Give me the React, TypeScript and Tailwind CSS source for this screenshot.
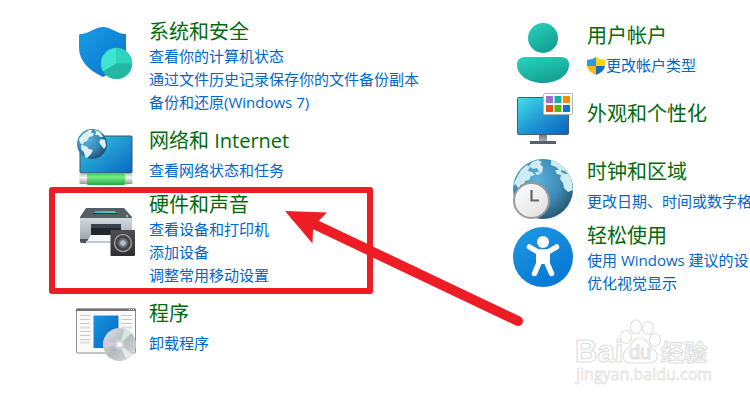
import type { ReactNode } from "react";

type Item = {
  title: string;
  links: string[];
  icon: ReactNode;
  rowCls?: string;
  iconCls?: string;
  bodyCls?: string;
  shield?: boolean;
};

function SecurityIcon() {
  return (
    <svg viewBox="0 0 60 60" className="size-full" aria-hidden="true">
      <defs>
        <linearGradient id="sec-a" x1="0" y1="0" x2="1" y2="1">
          <stop offset="0" stopColor="#1b9de2" />
          <stop offset="1" stopColor="#0672cf" />
        </linearGradient>
      </defs>
      <path d="M5 11C14 11 20 4 28 4s14 7 23 7v16C51 39 42 48 28 54 13 47 4 37 4 25V12Z" fill="url(#sec-a)" />
      <circle cx="41.500" cy="40.500" r="15.700" fill="#28c4ae" />
      <path d="M41.500 40.500V25a15.500 15.500 0 0 0-13.400 23.200Z" fill="#3fe4d0" />
      <path d="M41.500 40.500V25A15.500 15.500 0 0 1 57 40.500Z" fill="#30d3bd" />
      <path d="M41.500 40.500H57A15.500 15.500 0 0 1 28.100 48.200Z" fill="#22b8a5" />
    </svg>
  );
}

function NetworkIcon() {
  return (
    <svg viewBox="0 0 60 60" className="size-full" aria-hidden="true">
      <defs>
        <linearGradient id="net-a" x1="0" y1="0" x2="1" y2="1">
          <stop offset="0" stopColor="#36c8e0" />
          <stop offset="1" stopColor="#0b67c1" />
        </linearGradient>
        <radialGradient id="net-b" cx="0.35" cy="0.35" r="0.7">
          <stop offset="0" stopColor="#5fb4dc" />
          <stop offset="0.600" stopColor="#3587b5" />
          <stop offset="1" stopColor="#1e4f71" />
        </radialGradient>
        <linearGradient id="net-c" x1="0" y1="0" x2="0" y2="1">
          <stop offset="0" stopColor="#37c95a" />
          <stop offset="0.300" stopColor="#7af082" />
          <stop offset="1" stopColor="#25a548" />
        </linearGradient>
        <linearGradient id="net-d" x1="0" y1="0" x2="0" y2="1">
          <stop offset="0" stopColor="#c4c4c4" />
          <stop offset="0.350" stopColor="#f8f8f8" />
          <stop offset="1" stopColor="#8f9a94" />
        </linearGradient>
      </defs>
      <rect x="5" y="8" width="52" height="37" rx="1" fill="url(#net-a)" stroke="#42525e" />
      <rect x="4.500" y="46" width="53" height="10" rx="1" fill="url(#net-d)" />
      <rect x="12" y="45.500" width="38" height="11.500" rx="1" fill="url(#net-c)" />
      <circle cx="17" cy="16" r="15" fill="url(#net-b)" />
      <g fill="#dcf2f6">
        <path d="M4 11 8 6l6-4 3 0-1 3 3 0-1 3-4 1-2 4-3 1-1 3-3-2Z" />
        <path d="M6 17l5 1 3 3 4 1-2 4-4 4-2-1-1-5-3-3Z" />
        <path d="M20 2l5 2 3 5-3 0-2-2-3 0 1-2Z" />
        <path d="M26 11l4 1 1 6-2 3-3-4-2-3Z" />
      </g>
    </svg>
  );
}

function HardwareIcon() {
  return (
    <svg viewBox="0 0 60 60" className="size-full" aria-hidden="true">
      <defs>
        <linearGradient id="hw-a" x1="0" y1="0" x2="0" y2="1">
          <stop offset="0" stopColor="#d4dae1" />
          <stop offset="1" stopColor="#9ba4ae" />
        </linearGradient>
        <linearGradient id="hw-b" x1="0" y1="0" x2="1" y2="0">
          <stop offset="0" stopColor="#1fb7dc" />
          <stop offset="1" stopColor="#3ee59a" />
        </linearGradient>
        <linearGradient id="hw-c" x1="0" y1="0" x2="0" y2="1">
          <stop offset="0" stopColor="#4d4d4d" />
          <stop offset="1" stopColor="#303030" />
        </linearGradient>
      </defs>
      <path d="M11 8h38l8 9v2H5v-2Z" fill="#565e66" />
      <path d="M21 11h18l3 2H18Z" fill="url(#hw-b)" />
      <path d="M18 13h24v1H18Z" fill="#2b3238" />
      <circle cx="52" cy="16" r="1.200" fill="#5af03c" />
      <path d="M5 18h52v22H5Z" fill="url(#hw-a)" />
      <path d="M5 39h52v4H7q-2 0-2-2Z" fill="#4b5157" />
      <path d="M16 24h30v15H16Z" fill="#20262c" />
      <path d="M16 24h30v4H16Z" fill="#39434b" />
      <path d="M16 35h26l-3 8H11Z" fill="#f6f7f8" />
      <path d="M11 41h31v2H11Z" fill="#c4cbd0" />
      <rect x="35.500" y="30" width="24.500" height="26" rx="1" fill="url(#hw-c)" />
      <circle cx="48" cy="43" r="8.500" fill="#444" stroke="#9b9b9b" strokeWidth="1.500" />
      <circle cx="48" cy="43" r="5" fill="#69727a" />
      <circle cx="48" cy="43" r="2.800" fill="#b5bfc6" />
    </svg>
  );
}

function ProgramsIcon() {
  return (
    <svg viewBox="0 0 62 60" className="h-full w-[62px]" aria-hidden="true">
      <defs>
        <linearGradient id="pr-a" x1="0" y1="0" x2="1" y2="1">
          <stop offset="0" stopColor="#1795e0" />
          <stop offset="1" stopColor="#0666c2" />
        </linearGradient>
        <linearGradient id="pr-b" x1="0" y1="0" x2="1" y2="1">
          <stop offset="0" stopColor="#e2e5e6" />
          <stop offset="0.500" stopColor="#b3bbbe" />
          <stop offset="1" stopColor="#dadddd" />
        </linearGradient>
      </defs>
      <rect x="1.500" y="4" width="59" height="44" rx="1" fill="#fafafa" stroke="#8c8c8c" />
      <path d="M1 4.500q0-1 1-1h58q1 0 1 1V6H1Z" fill="#777370" />
      <path d="M54 4.500h1m1 0h1m1 0h1" stroke="#fff" />
      <path d="M5 10.500h10M5 14.500h10M5 18.500h10M5 26.500h10M5 30.500h10M5 34.500h10M46 10.500h11M46 14.500h11M46 18.500h11" stroke="#c9c9c9" />
      <path d="M5 22.500h10M5 37.500h10M46 22.500h11" stroke="#dedede" strokeWidth="2" />
      <path d="M18.500 10.500h25V43h-25Z" fill="url(#pr-a)" />
      <circle cx="44.500" cy="39.500" r="16.500" fill="url(#pr-b)" />
      <path d="m44.500 39.500 5-15.500q4 1 7 4Z" fill="#d3ead6" />
      <path d="m44.500 39.500-16-4q-1 3 0 7Z" fill="#ddc7df" />
      <path d="m44.500 39.500 7 15q4-2 6-5Z" fill="#e7e9e9" />
      <circle cx="44.500" cy="39.500" r="5" fill="#cfd5d6" />
      <circle cx="44.500" cy="39.500" r="2.500" fill="#fafafa" />
    </svg>
  );
}

function UserIcon() {
  return (
    <svg viewBox="0 0 60 60" className="size-full" aria-hidden="true">
      <defs>
        <linearGradient id="us-a" x1="0.200" y1="0" x2="0.800" y2="1">
          <stop offset="0" stopColor="#28d0bc" />
          <stop offset="1" stopColor="#109a8c" />
        </linearGradient>
      </defs>
      <circle cx="30" cy="15" r="15" fill="url(#us-a)" />
      <path d="M12 34h36q8 0 8 8c0 11-13 18-26 18S4 53 4 42q0-8 8-8Z" fill="url(#us-a)" />
    </svg>
  );
}

function AppearanceIcon() {
  return (
    <svg viewBox="0 0 60 60" className="size-full" aria-hidden="true">
      <defs>
        <linearGradient id="ap-a" x1="0" y1="0" x2="1" y2="1">
          <stop offset="0" stopColor="#3fe0ee" />
          <stop offset="0.500" stopColor="#2299d4" />
          <stop offset="1" stopColor="#0a62bc" />
        </linearGradient>
        <linearGradient id="ap-b" x1="0" y1="0" x2="0" y2="1">
          <stop offset="0" stopColor="#6f7b84" />
          <stop offset="1" stopColor="#a4adb4" />
        </linearGradient>
      </defs>
      <rect x="4.500" y="6.500" width="51" height="37" rx="1" fill="url(#ap-a)" stroke="#4b5c69" />
      <path d="M26 44h8v6h-8Z" fill="url(#ap-b)" />
      <path d="M17 50h26v3H17Z" fill="#56616a" />
      <rect x="30.500" y="2.500" width="29" height="21" rx="1" fill="#fbfbfb" stroke="#b5b5b5" />
      <path d="M33 5h7v7h-7Z" fill="#9a70d8" />
      <path d="M41.500 5h7v7h-7Z" fill="#18b39f" />
      <path d="M50 5h7v7h-7Z" fill="#f58c08" />
      <path d="M33 14h7v7h-7Z" fill="#e25418" />
      <path d="M41.500 14h7v7h-7Z" fill="#58b512" />
      <path d="M50 14h7v7h-7Z" fill="#0878d4" />
    </svg>
  );
}

function ClockIcon() {
  return (
    <svg viewBox="0 0 60 60" className="size-full" aria-hidden="true">
      <defs>
        <radialGradient id="ck-a" cx="0.400" cy="0.350" r="0.650">
          <stop offset="0" stopColor="#5bb1d9" />
          <stop offset="0.600" stopColor="#3d8db8" />
          <stop offset="1" stopColor="#285e7c" />
        </radialGradient>
        <linearGradient id="ck-b" x1="0" y1="0" x2="1" y2="1">
          <stop offset="0" stopColor="#fff" />
          <stop offset="1" stopColor="#dedede" />
        </linearGradient>
        <clipPath id="ck-c">
          <circle cx="30" cy="30" r="30" />
        </clipPath>
      </defs>
      <circle cx="30" cy="30" r="30" fill="url(#ck-a)" />
      <g fill="#d0ecf2" clipPath="url(#ck-c)">
        <path d="m3 20 5-9 6-5 3 2-2 4 4 1 3 3-4 1-2 4-4 1-1 3-4 1 0 3-3-1-1-3-3 2Z" />
        <path d="m19 3 6-2 4 2-2 2 3 3-1 6-3-1-2-4-4 1-4-3Z" />
        <path d="m22 13 4 0 2 2-4 1Z" />
        <path d="m38 1 8 2 8 7 4 7 2 14-5 2-4-4-1-5-3-4 1-4-4-1-2-4 4 0-3-3-5-2Z" />
      </g>
      <path d="m48 11 4 1 3 3-3 0-4-2Z" fill="#4a9dc6" />
      <circle cx="18.500" cy="41.500" r="17.500" fill="url(#ck-b)" stroke="#999" strokeWidth="2" />
      <path d="M18.500 31v10.500H26" fill="none" stroke="#666" strokeWidth="2.200" />
    </svg>
  );
}

function AccessIcon() {
  return (
    <svg viewBox="0 0 60 60" className="size-full" aria-hidden="true">
      <defs>
        <linearGradient id="ac-a" x1="0.200" y1="0" x2="0.800" y2="1">
          <stop offset="0" stopColor="#1c98e2" />
          <stop offset="1" stopColor="#0575d4" />
        </linearGradient>
      </defs>
      <circle cx="30" cy="30" r="30" fill="url(#ac-a)" />
      <circle cx="30" cy="15" r="6" fill="#fff" />
      <path d="m16.500 20 8.500 5h10l8.500-5" fill="none" stroke="#fff" strokeWidth="5.500" strokeLinecap="round" strokeLinejoin="round" />
      <path d="M23 24h14v13H23Z" fill="#fff" />
      <path d="m26 36-4.500 10.500M34 36l4.500 10.500" stroke="#fff" strokeWidth="5.500" strokeLinecap="round" />
    </svg>
  );
}

function UacShield() {
  return (
    <svg viewBox="0 0 18 18" className="size-[18px]" aria-hidden="true">
      <path d="M9 0Q5 3 0 3v6h9Z" fill="#2a9be4" />
      <path d="M9 0q4 3 9 3v6H9Z" fill="#ffd20a" />
      <path d="M0 9q1 6 9 9V9Z" fill="#fbb713" />
      <path d="M18 9q-1 6-9 9V9Z" fill="#1270c4" />
    </svg>
  );
}

const LEFT: Item[] = [
  {
    title: "系统和安全",
    links: ["查看你的计算机状态", "通过文件历史记录保存你的文件备份副本", "备份和还原(Windows 7)"],
    icon: <SecurityIcon />,
    iconCls: "mt-1",
  },
  {
    title: "网络和 Internet",
    links: ["查看网络状态和任务"],
    icon: <NetworkIcon />,
    rowCls: "mt-3.5",
  },
  {
    title: "硬件和声音",
    links: ["查看设备和打印机", "添加设备", "调整常用移动设置"],
    icon: <HardwareIcon />,
    rowCls: "mt-1",
    iconCls: "mt-2",
  },
  {
    title: "程序",
    links: ["卸载程序"],
    icon: <ProgramsIcon />,
    rowCls: "mt-3.5",
    iconCls: "mt-1",
  },
];

const RIGHT: Item[] = [
  {
    title: "用户帐户",
    links: ["更改帐户类型"],
    icon: <UserIcon />,
    shield: true,
  },
  {
    title: "外观和个性化",
    links: [],
    icon: <AppearanceIcon />,
    rowCls: "mt-2",
    bodyCls: "mt-2.5",
  },
  {
    title: "时钟和区域",
    links: ["更改日期、时间或数字格"],
    icon: <ClockIcon />,
    rowCls: "mt-2",
  },
  {
    title: "轻松使用",
    links: ["使用 Windows 建议的设", "优化视觉显示"],
    icon: <AccessIcon />,
    rowCls: "mt-1",
    iconCls: "mt-1",
  },
];

function Category({ item }: { item: Item }) {
  return (
    <li className={`flex gap-3.5 ${item.rowCls ?? ""}`}>
      <div className={`h-[60px] w-[60px] shrink-0 ${item.iconCls ?? ""}`}>{item.icon}</div>
      <div className={item.bodyCls ?? ""}>
        <h2 className="text-[20px] leading-[26px] text-[#006b0c]">
          <a href="#">{item.title}</a>
        </h2>
        <ul className={item.links.length === 1 ? "mt-[5px]" : ""}>
          {item.links.map((l) => (
            <li key={l} className="flex items-center gap-px text-[15px] leading-[23px] text-[#0066cc]">
              {item.shield && <UacShield />}
              <a href="#">{l}</a>
            </li>
          ))}
        </ul>
      </div>
    </li>
  );
}

function Annotation() {
  return (
    <svg width="750" height="401" viewBox="0 0 750 401" className="pointer-events-none absolute top-0 left-0" aria-hidden="true">
      <rect x="52" y="190" width="318" height="101" fill="none" stroke="#ee1c25" strokeWidth="6" strokeLinejoin="round" />
      <path d="M316 225 518 321" stroke="#ee1c25" strokeWidth="10" strokeLinecap="round" />
      <path d="m285 211 42 1.500-9 9-5 9-.500 13Z" fill="#ee1c25" />
    </svg>
  );
}

function Watermark() {
  return (
    <svg
      width="150"
      height="76"
      viewBox="0 0 150 76"
      className="pointer-events-none absolute top-[315px] left-[570px] font-['Liberation_Sans','Noto_Sans_CJK_SC',sans-serif]"
      aria-hidden="true"
    >
      <g fill="#fff" stroke="#e0e0e0" strokeWidth="1.200" strokeLinejoin="round">
        <text x="5" y="47" fontSize="31" fontWeight="700">Bai</text>
        <ellipse cx="56" cy="22" rx="5.500" ry="6.500" />
        <ellipse cx="66" cy="12" rx="5.500" ry="7" />
        <ellipse cx="78" cy="13" rx="5.500" ry="6.500" />
        <ellipse cx="85" cy="25" rx="5.500" ry="6.500" />
        <path d="M70 23c7 0 8 7 13 11 7 5 5 14-4 14H61c-9 0-10-9-4-14 5-4 6-11 13-11Z" />
        <text x="59" y="44" fontSize="20">du</text>
        <text x="91" y="46" fontSize="23" fontWeight="700">经验</text>
      </g>
      <text x="6" y="65" fontSize="16" fill="#fff" stroke="#e4e4e4" strokeWidth="0.800" className="font-['Open_Sans',sans-serif]">
        jingyan.baidu.com
      </text>
    </svg>
  );
}

export default function App() {
  return (
    <main className="relative min-h-screen overflow-hidden bg-white font-['Open_Sans','Noto_Sans_CJK_SC',sans-serif]">
      <div className="grid grid-cols-[438fr_237fr] pb-9 pl-[75px] whitespace-nowrap">
        <ul className="min-w-0 pt-[19px]">
          {LEFT.map((item) => (
            <Category key={item.title} item={item} />
          ))}
        </ul>
        <ul className="min-w-0 pt-[23px]">
          {RIGHT.map((item) => (
            <Category key={item.title} item={item} />
          ))}
        </ul>
      </div>
      <Annotation />
      <Watermark />
    </main>
  );
}
